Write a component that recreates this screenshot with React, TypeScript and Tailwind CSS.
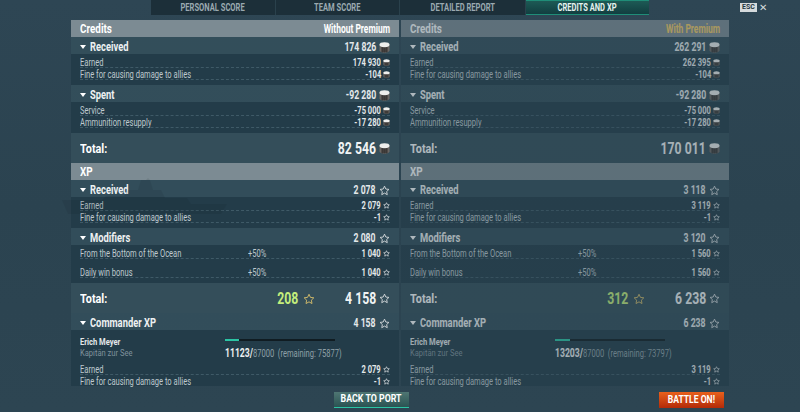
import type { ReactNode } from 'react';

const font = { fontFamily: 'Roboto, "Liberation Sans", sans-serif' };

// No condensed face is installed, so text is squeezed horizontally
function Left({ children, className = 'scale-x-[0.72]' }: { children: ReactNode; className?: string }) {
  return <span className={`inline-block origin-left whitespace-nowrap ${className}`}>{children}</span>;
}

function Right({ children, className = 'scale-x-[0.72]' }: { children: ReactNode; className?: string }) {
  return <span className={`inline-block origin-right whitespace-nowrap ${className}`}>{children}</span>;
}

function Coin({ big }: { big?: boolean }) {
  const size = big ? 11 : 7;
  return (
    <svg width={size} height={size} viewBox="0 0 12 12" className="shrink-0">
      <path d="M0.500 3v6c0 1.600 2.500 2.700 5.500 2.700s5.500-1.100 5.500-2.700V3z" fill="#6a6663" />
      <path d="M2.500 5.500v5.500h7V5.500z" fill="#45413f" />
      <ellipse cx="6" cy="3" rx="5.500" ry="2.700" fill="#eeeeec" />
      <path d="M4 6v5.500M6 6v5.500M8 6v5.500" stroke="#2f2c2a" strokeWidth="0.500" />
    </svg>
  );
}

function Star({ size, gold }: { size: number; gold?: boolean }) {
  return (
    <svg width={size} height={size} viewBox="0 0 24 24" className="shrink-0" fill="none" stroke={gold ? '#c9b56a' : '#d5dadc'} strokeWidth={size > 8 ? 2 : 2.600}>
      <path d="M12 2.500l2.900 6.300 6.800.8-5 4.700 1.300 6.800-6-3.400-6 3.400 1.300-6.800-5-4.700 6.800-.8z" />
    </svg>
  );
}

function Caret() {
  return <span className="mr-[4px] h-0 w-0 border-x-[3.500px] border-t-[4px] border-x-transparent border-t-white" />;
}

function SectionHead({ label, value, icon }: { label: string; value: string; icon: ReactNode }) {
  return (
    <div className="flex h-[17px] items-center justify-between bg-[#34505d]/80 px-[9px] pt-[3px]">
      <div className="flex items-center text-[13px] font-bold text-[#eef1f2]">
        <Caret />
        <Left>{label}</Left>
      </div>
      <div className="flex items-center gap-[3px] text-[12px] font-bold text-[#e4e8ea]">
        <Right>{value}</Right>
        {icon}
      </div>
    </div>
  );
}

function Row({ label, value, icon, mid, tall, plain }: { label: string; value: string; icon: ReactNode; mid?: string; tall?: boolean; plain?: boolean }) {
  return (
    <div className={tall ? 'pb-[7px]' : ''}>
      <div className={`relative flex h-[12px] items-end justify-between text-[10.500px] leading-[9px] text-[#bfc9ce] ${plain ? 'pb-[1px]' : 'border-b border-dashed border-[#3f5a67]'}`}>
        <Left>{label}</Left>
        {mid && (
          <span className="absolute left-[168px]">
            <Left>{mid}</Left>
          </span>
        )}
        <span className="flex items-center gap-[2px] font-bold text-[#e4e8ea]">
          <Right>{value}</Right>
          {icon}
        </span>
      </div>
    </div>
  );
}

function Title({ left, right, gold }: { left: string; right?: string; gold?: boolean }) {
  return (
    <div className="flex h-[17px] items-center justify-between bg-[#7c8b93] px-[9px] text-[13px] font-bold text-white">
      <Left className="scale-x-[0.76]">{left}</Left>
      {right && <Right className={`scale-x-[0.65] ${gold ? 'text-[#f5cc66]' : 'text-white'}`}>{right}</Right>}
    </div>
  );
}

function Total({ extra, value, icon }: { extra?: string; value: string; icon: ReactNode }) {
  return (
    <div className="flex h-[30px] items-center justify-between bg-[#344e5a] px-[9px] pt-[1px]">
      <Left className="scale-x-[0.8] text-[13.500px] font-bold text-white">Total:</Left>
      <div className="flex items-center">
        {extra && (
          <span className="mr-[18px] flex items-center gap-[4px] text-[17px] font-bold text-[#c4ee7c]">
            <Right>{extra}</Right>
            <Star size={12} gold />
          </span>
        )}
        <span className="flex items-center gap-[3px] text-[17px] font-bold text-[#f0f3f4]">
          <Right>{value}</Right>
          {icon}
        </span>
      </div>
    </div>
  );
}

interface ColumnData {
  heading: string;
  gold: boolean;
  credits: string[];
  xp: string[];
  bonus: string;
  xpTotal: string;
  current: string;
  remaining: string;
  fill: string;
  dim: boolean;
}

function Column({ d }: { d: ColumnData }) {
  const smallCoin = <Coin />;
  const smallStar = <Star size={7} />;
  return (
    <div className={`h-[366px] w-[328px] ${d.dim ? 'opacity-[0.62]' : ''}`}>
      <Title left="Credits" right={d.heading} gold={d.gold} />
      <SectionHead label="Received" value={d.credits[0]} icon={<Coin big />} />
      <div className="h-[31px] bg-[#233c49] px-[9px] pt-[2px]">
        <Row label="Earned" value={d.credits[1]} icon={smallCoin} />
        <Row label="Fine for causing damage to allies" value="-104" icon={smallCoin} />
      </div>
      <SectionHead label="Spent" value="-92 280" icon={<Coin big />} />
      <div className="h-[31px] bg-[#233c49] px-[9px] pt-[2px]">
        <Row label="Service" value="-75 000" icon={smallCoin} />
        <Row label="Ammunition resupply" value="-17 280" icon={smallCoin} />
      </div>
      <Total value={d.credits[2]} icon={<Coin big />} />
      <Title left="XP" />
      <SectionHead label="Received" value={d.xp[0]} icon={<Star size={11} />} />
      <div className="h-[31px] bg-[#233c49] px-[9px] pt-[2px]">
        <Row label="Earned" value={d.xp[1]} icon={smallStar} />
        <Row label="Fine for causing damage to allies" value="-1" icon={smallStar} />
      </div>
      <SectionHead label="Modifiers" value={d.xp[2]} icon={<Star size={11} />} />
      <div className="h-[38px] bg-[#233c49] px-[9px] pt-[2px]">
        <Row label="From the Bottom of the Ocean" mid="+50%" value={d.xp[3]} icon={smallStar} tall />
        <Row label="Daily win bonus" mid="+50%" value={d.xp[3]} icon={smallStar} />
      </div>
      <Total extra={d.bonus} value={d.xpTotal} icon={<Star size={11} />} />
      <SectionHead label="Commander XP" value={d.xpTotal} icon={<Star size={11} />} />
      <div className="h-[56px] bg-[#233c49] px-[9px] pt-[7px]">
        <div className="flex h-[26px]">
          <div className="w-[145px] text-[9px] leading-[11px]">
            <div className="font-bold text-[#e4e8ea]">
              <Left className="scale-x-[0.84]">Erich Meyer</Left>
            </div>
            <div className="text-[#7f929c]">
              <Left className="scale-x-[0.84]">Kapitän zur See</Left>
            </div>
          </div>
          <div className="w-[112px]">
            <div className="mt-[2px] h-[2px] w-[110px] bg-[#101c22]">
              <div className={`h-[2px] bg-[#2bc4a4] ${d.fill}`} />
            </div>
            <div className="mt-[3px] text-[10.500px] text-[#8fa0a8]">
              <Left>
                <span className="text-[12px] font-bold text-[#eef1f2]">{d.current}/</span>87000
                <span className="ml-[5px]">(remaining: {d.remaining})</span>
              </Left>
            </div>
          </div>
        </div>
        <Row label="Earned" value={d.xp[1]} icon={smallStar} />
        <Row label="Fine for causing damage to allies" value="-1" icon={smallStar} plain />
      </div>
    </div>
  );
}

const left: ColumnData = {
  heading: 'Without Premium',
  gold: false,
  credits: ['174 826', '174 930', '82 546'],
  xp: ['2 078', '2 079', '2 080', '1 040'],
  bonus: '208',
  xpTotal: '4 158',
  current: '11123',
  remaining: '75877',
  fill: 'w-[14px]',
  dim: false,
};

const right: ColumnData = {
  heading: 'With Premium',
  gold: true,
  credits: ['262 291', '262 395', '170 011'],
  xp: ['3 118', '3 119', '3 120', '1 560'],
  bonus: '312',
  xpTotal: '6 238',
  current: '13203',
  remaining: '73797',
  fill: 'w-[15px]',
  dim: true,
};

const tabs = [
  { label: 'PERSONAL SCORE', width: 'w-[125px]' },
  { label: 'TEAM SCORE', width: 'w-[124px]' },
  { label: 'DETAILED REPORT', width: 'w-[126px]' },
];

export default function App() {
  return (
    <div style={font} className="relative flex h-[412px] w-[800px] flex-col overflow-hidden bg-gradient-to-b from-[#2e4654] via-[#2b4350] to-[#2d4552]">
      <div className="flex h-[15px] items-center pl-[151px]">
        {tabs.map((t) => (
          <div key={t.label} className={`flex h-[15px] items-center justify-center border-r border-[#2a414c] bg-[#1c2f39] text-[10.500px] font-bold text-[#9aa9b0] ${t.width}`}>
            <span className="inline-block scale-x-[0.72] whitespace-nowrap">{t.label}</span>
          </div>
        ))}
        <div className="flex h-[15px] w-[123px] items-center justify-center border-y border-[#1f8d78] bg-gradient-to-b from-[#1d5a55] to-[#123e40] text-[10.500px] font-bold text-[#e4f2ef]">
          <span className="inline-block scale-x-[0.72] whitespace-nowrap">CREDITS AND XP</span>
        </div>
        <div className="ml-[91px] flex h-[9px] w-[17px] items-center justify-center bg-[#d5dadc] text-[7px] font-bold text-[#24363f]">ESC</div>
        <span className="ml-[2px] text-[10px] leading-none text-[#d5dadc]">✕</span>
      </div>
      <div className="mt-[5px] flex gap-[2px] pl-[71px]">
        <Column d={left} />
        <Column d={right} />
      </div>
      <div className="mt-[6px] flex pl-[334px]">
        <div className="flex h-[16px] w-[75px] items-center justify-center border-b border-[#2bc4a4] bg-gradient-to-b from-[#4f7673] to-[#2a5453] text-[11px] font-bold text-white">
          <span className="inline-block scale-x-[0.8] whitespace-nowrap">BACK TO PORT</span>
        </div>
        <div className="ml-[250px] flex h-[16px] w-[65px] items-center justify-center bg-gradient-to-b from-[#e8601c] to-[#b32a08] text-[11px] font-bold text-white">
          <span className="inline-block scale-x-[0.78] whitespace-nowrap">BATTLE ON!</span>
        </div>
      </div>
      {/* faint ship silhouette showing through the panels */}
      <svg className="pointer-events-none absolute left-[60px] top-[178px] opacity-[0.1]" width="170" height="36" viewBox="0 0 170 36">
        <path d="M2 22h40l4-4h18l4-6h10l3-10h5l2-2 2 2 3 10h8l4 8h22l4 6h36l-6 10H8z" fill="#0f1c23" />
      </svg>
    </div>
  );
}
